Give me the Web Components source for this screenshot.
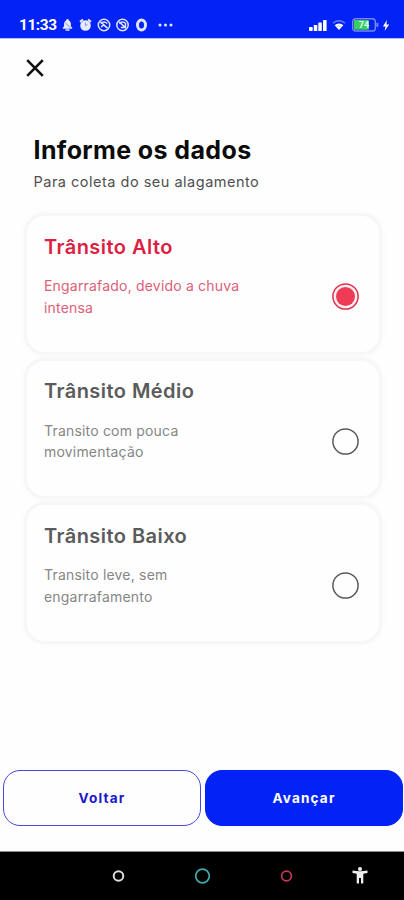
<!DOCTYPE html>
<html lang="pt-BR">
<head>
<meta charset="utf-8">
<title>Informe os dados</title>
<style>
html,body{margin:0;background:#fefefe}
body{font-family:Inter,"Liberation Sans",sans-serif}
</style>
</head>
<body>
<traffic-app></traffic-app>
<script>
const define = (name, html) => customElements.define(name, class extends HTMLElement {
  constructor() {
    super();
    const t = document.createElement('template');
    t.innerHTML = html;
    this.attachShadow({mode: 'open'}).append(t.content.cloneNode(true));
  }
});

define('status-bar', `
<style>
:host{display:flex;box-sizing:border-box;height:38px;padding:12px 14px 0 19px;background:#0222f6;color:#fff;box-shadow:0 1px #b9bdfa;align-items:center;justify-content:space-between}
div{display:flex;align-items:center}
.time{font:700 15.4px/20px Roboto,sans-serif;letter-spacing:-.4px;width:43px;white-space:nowrap}
svg{display:block;overflow:visible}
.batt{position:relative;width:27px;height:14px}
.batt span{position:absolute;left:0;top:0;width:24px;text-align:center;font:700 9px/14px Roboto,sans-serif;color:#e2ffe9}
</style>
<div><span class="time">11:33</span>
<svg width="112" height="14" viewBox="0 0 112 14" fill="none" stroke="#dfe3ff" stroke-width="1.5">
 <path d="M.8 10.800V9.800l1.300-1.500V5.600C2.300 3.500 3.800 2.300 5.500 2.300S8.700 3.500 8.900 5.600v2.700l1.300 1.500v1z" fill="#e8eaff" stroke="none"/><circle cx="5.500" cy="2.200" r="1.200" fill="#e8eaff" stroke="none"/><path d="M3.500 12h4"/><path d="M3.500 5l5 4.700" stroke="#5a6cf8" stroke-width=".8"/>
 <circle cx="23.500" cy="7.500" r="5.300" fill="#e8eaff" stroke="none"/><path d="M18 3.900l3-2.400M26 1.500l3 2.400" stroke-width="2.200"/><path d="M23.500 4.500v3.200l2-1" stroke="#6a7af8" stroke-width=".8"/>
 <circle cx="42" cy="7" r="5.700"/><path d="M38.700 5.300c2-1.600 4.700-1.600 6.500.2M39.400 9.300c.5-2.400 3.700-2.300 5 .4M38.500 3.800l7 6.300"/>
 <circle cx="60.500" cy="7" r="5.700"/><path d="M57.200 5.300c2-1.600 4.700-1.600 6.500.2M63.500 5v4.400h-4.700M57 3.800l7 6.300"/>
 <ellipse cx="79.500" cy="7" rx="4" ry="5" stroke-width="3"/>
 <g fill="#e8eaff" stroke="none"><circle cx="98" cy="7" r="1.500"/><circle cx="103.500" cy="7" r="1.500"/><circle cx="109" cy="7" r="1.500"/></g>
</svg></div>
<div>
<svg width="19" height="13" viewBox="0 0 19 13" fill="#fff"><rect y="8" width="3.700" height="4" rx=".8"/><rect x="4.800" y="6" width="3.500" height="6" rx=".6"/><rect x="9.300" y="3.500" width="3.500" height="8.500" rx=".6"/><rect x="14" y="1" width="3.600" height="11" rx=".6"/></svg>
<svg style="margin-left:4px" width="14" height="12" viewBox="0 0 14 12" fill="none"><path d="M1 4.300a8.500 8.500 0 0 1 12 0" stroke="#6c7dfb" stroke-width="1.500"/><path d="M2.600 6.200a6.500 6.500 0 0 1 8.800 0L7 11z" fill="#fff"/><path d="M4.200 8a4 4 0 0 1 5.600 0" stroke="#8f9cfb" stroke-width=".6"/></svg>
<div class="batt" style="margin-left:6px"><svg width="27" height="14" viewBox="0 0 27 14" fill="none"><rect x=".700" y=".700" width="22.600" height="12.300" rx="2.800" stroke="#7589ef" stroke-width="1.400"/><rect x="2" y="2" width="15" height="9.700" rx="1" fill="#39cd64"/><path d="M25.300 4.800v4" stroke="#7589ef" stroke-width="2"/></svg><span>74</span></div>
<svg style="margin-left:3px" width="8" height="13" viewBox="0 0 8 13" fill="#fff"><path d="M4.900 1 .9 7.400h2.600L2.600 12l4.600-6.500H4.400z"/></svg>
</div>`);

define('close-button', `
<style>:host{display:block;width:18px;height:18px}svg{display:block}</style>
<svg width="18" height="18" viewBox="0 0 18 18" stroke="#111" stroke-width="2.600"><path d="M1.200 1.200 16.800 16.800M16.800 1.200 1.200 16.800"/></svg>`);

define('page-heading', `
<style>
:host{display:block;white-space:nowrap}
.t{font-size:25px;font-weight:650;line-height:30px;color:#0b0b0b;letter-spacing:.38px}
.s{font-size:14.500px;font-weight:370;line-height:20px;margin-top:6.500px;color:#505050;letter-spacing:.5px}
</style><div class="t"><slot></slot></div><div class="s"><slot name="sub"></slot></div>`);

define('option-card', `
<style>
:host{display:flex;box-sizing:border-box;height:135.500px;border-radius:18px;background:#fefefe;box-shadow:0 0 0 3.500px #f7f7f7,0 0 4px 5px #fbfbfb;padding:18.500px 20px 0 17.500px;justify-content:space-between;--c:#5b5b5b;--d:#868686}
:host([selected]){--c:#dc1f42;--d:#dc6078}
.t{font-size:20px;font-weight:600;line-height:24px;color:var(--c);white-space:nowrap;letter-spacing:.45px}
.d{font-size:14px;font-weight:370;line-height:21.500px;margin-top:16.500px;color:var(--d);white-space:nowrap;letter-spacing:.19px}
svg{display:block;margin-top:48.500px}
.on{display:none}
:host([selected]) .on{display:block}:host([selected]) .off{display:none}
</style>
<div><div class="t"><slot></slot></div><div class="d"><slot name="desc"></slot></div></div>
<svg width="27" height="27" viewBox="0 0 27 27" fill="none"><circle class="off" cx="13.500" cy="13.500" r="12.600" stroke="#5a5a5a" stroke-width="1.500"/><g class="on"><circle cx="13.500" cy="13.500" r="12.600" fill="#fff0f1" stroke="#e0304c" stroke-width="1.500"/><circle cx="13.500" cy="13.500" r="9.500" fill="#ef3c56"/></g></svg>`);

define('action-button', `
<style>
:host{display:flex;box-sizing:border-box;flex:1;height:56px;border:1.500px solid #4848dc;border-radius:17px;align-items:center;justify-content:center;color:#1c18cc;background:#fefefe;font:700 13.600px/20px Inter,sans-serif;letter-spacing:1.150px;padding-bottom:1px}
:host([primary]){background:#0222f6;border-color:#0222f6;color:#fff}
</style><slot></slot>`);

define('nav-bar', `
<style>
:host{display:block;height:48px;background:#000;box-shadow:0 -1px #8a8a8a}svg{display:block}
</style>
<svg width="404" height="48" viewBox="0 0 404 48" fill="none"><circle cx="118.500" cy="24" r="4.800" stroke="#ddd" stroke-width="2"/><circle cx="202.500" cy="24" r="6.800" stroke="#40a9ad" stroke-width="1.700"/><circle cx="286.500" cy="24" r="4.900" stroke="#c83a5e" stroke-width="1.700"/><g fill="#eee"><circle cx="360" cy="17" r="2"/><path d="M352.500 18.500c5 1 10 1 15 0v2.500l-4.200.8V31.500h-2.300V26h-2v5.500h-2.300V21.800l-4.200-.8z"/></g></svg>`);

define('traffic-app', `
<style>
:host{display:flex;flex-direction:column;width:404px;height:900px;overflow:hidden}
close-button{margin:21px 0 0 26px}
page-heading{margin:58px 0 0 33.500px}
main{display:flex;flex-direction:column;gap:9px;margin:24.500px 25.500px 0 26.500px}
footer{display:flex;gap:4px;padding:0 1px 26px 3px;margin-top:auto}
</style>
<status-bar></status-bar>
<close-button></close-button>
<page-heading>Informe os dados<span slot="sub">Para coleta do seu alagamento</span></page-heading>
<main>
<option-card selected>Trânsito Alto<span slot="desc">Engarrafado, devido a chuva<br>intensa</span></option-card>
<option-card>Trânsito Médio<span slot="desc">Transito com pouca<br>movimentação</span></option-card>
<option-card>Trânsito Baixo<span slot="desc">Transito leve, sem<br>engarrafamento</span></option-card>
</main>
<footer><action-button>Voltar</action-button><action-button primary>Avançar</action-button></footer>
<nav-bar></nav-bar>`);
</script>
</body>
</html>
